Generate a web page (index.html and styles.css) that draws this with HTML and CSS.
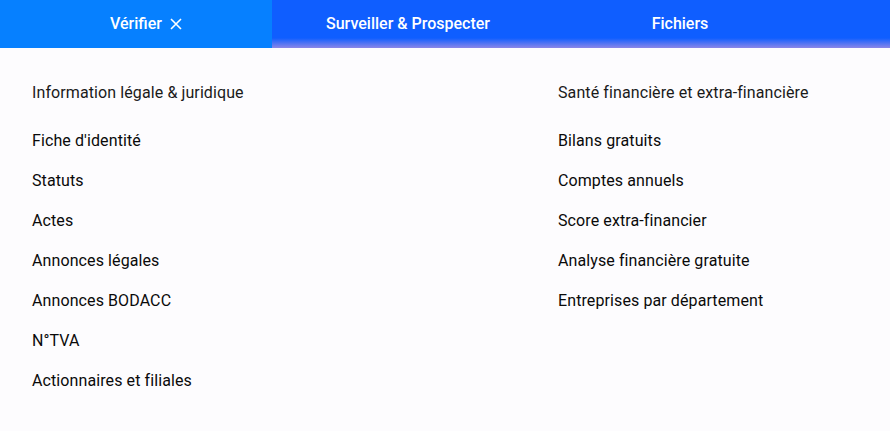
FILE: index.html
```html
<!DOCTYPE html>
<html lang="fr">
<head>
<meta charset="utf-8">
<link rel="stylesheet" href="styles.css">
</head>
<body>
<nav class="tabs">
  <div class="tab tab-active"><span class="tab-label">Vérifier<svg class="close" viewBox="0 0 12 12" width="12" height="12"><path d="M1 1L11 11M11 1L1 11" stroke="#fff" stroke-width="1.6" fill="none"/></svg></span></div>
  <div class="tab"><span class="tab-label">Surveiller &amp; Prospecter</span></div>
  <div class="tab"><span class="tab-label">Fichiers</span></div>
</nav>
<main class="menu">
  <section class="col">
    <h3 class="col-title">Information légale &amp; juridique</h3>
    <ul class="links">
      <li>Fiche d'identité</li>
      <li>Statuts</li>
      <li>Actes</li>
      <li>Annonces légales</li>
      <li>Annonces BODACC</li>
      <li>N°TVA</li>
      <li>Actionnaires et filiales</li>
    </ul>
  </section>
  <section class="col">
    <h3 class="col-title">Santé financière et extra-financière</h3>
    <ul class="links">
      <li>Bilans gratuits</li>
      <li>Comptes annuels</li>
      <li>Score extra-financier</li>
      <li>Analyse financière gratuite</li>
      <li>Entreprises par département</li>
    </ul>
  </section>
</main>
</body>
</html>
```
FILE: styles.css
```css
html, body {
  margin: 0;
  padding: 0;
  background: #fdfcfe;
  font-family: Roboto, "Liberation Sans", sans-serif;
}
.tabs {
  display: flex;
  height: 48px;
  background: linear-gradient(to bottom, #0f5eff 0px, #0f5eff 38px, #8b86e8 48px);
}
.tab {
  width: 272px;
  display: flex;
  align-items: center;
  justify-content: center;
  color: #fff;
  font-size: 16px;
  font-weight: 500;
}
.tab-active {
  background: #0680ff;
}
.tab-label {
  position: relative;
  line-height: 20px;
}
.close {
  position: absolute;
  left: calc(100% + 8px);
  top: 4px;
}
.menu {
  display: grid;
  grid-template-columns: 526px 1fr;
  padding: 0 32px;
}
.col-title {
  margin: 0;
  padding-top: 35px;
  font-size: 16px;
  font-weight: 400;
  line-height: 20px;
  letter-spacing: 0.1px;
  color: #1a1a1a;
}
.links {
  list-style: none;
  margin: 0;
  padding: 28px 0 0;
}
.links li {
  font-size: 16px;
  line-height: 20px;
  letter-spacing: 0.1px;
  color: #0a0a0a;
  margin-bottom: 20px;
}
```
